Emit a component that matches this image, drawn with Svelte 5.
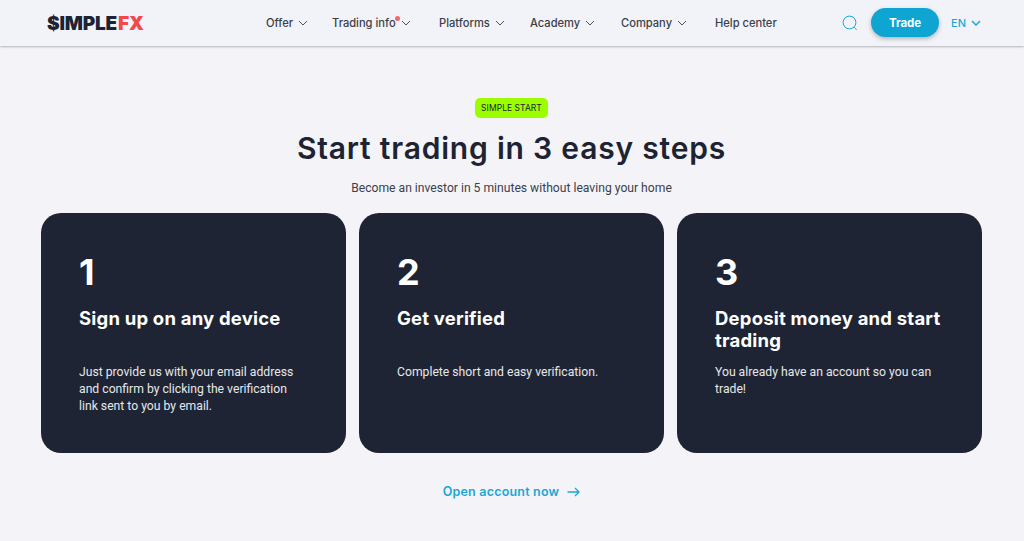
<script>
  const nav = [
    { label: "Offer", width: 66, caret: true },
    { label: "Trading info", width: 107, caret: true, dot: true },
    { label: "Platforms", width: 91, caret: true },
    { label: "Academy", width: 91, caret: true },
    { label: "Company", width: 94, caret: true },
    { label: "Help center", width: 62, caret: false }
  ];

  const steps = [
    {
      num: "1",
      title: "Sign up on any device",
      text: "Just provide us with your email address and confirm by clicking the verification link sent to you by email."
    },
    { num: "2", title: "Get verified", text: "Complete short and easy verification." },
    {
      num: "3",
      title: "Deposit money and start trading",
      text: "You already have an account so you can trade!"
    }
  ];
</script>

<header>
  <div class="logo">$IMPLE<span>FX</span></div>
  <nav>
    {#each nav as item}
      <div class="nav-item" style="width: {item.width}px">
        <span>{item.label}</span>
        {#if item.dot}<i class="dot"></i>{/if}
        {#if item.caret}
          <svg width="10" height="6" viewBox="0 0 10 6"><path d="M1 1l4 4 4-4" fill="none" stroke="#3a3f4b" stroke-width="0.9" /></svg>
        {/if}
      </div>
    {/each}
  </nav>
  <div class="actions">
    <svg class="search" width="16" height="16" viewBox="0 0 16 16">
      <circle cx="7.5" cy="7.5" r="6.4" fill="none" stroke="#1ba7d6" stroke-width="1" />
      <path d="M12.2 12.2l2.4 2.6" fill="none" stroke="#1ba7d6" stroke-width="1" />
    </svg>
    <button>Trade</button>
    <div class="lang">
      EN
      <svg width="10" height="6" viewBox="0 0 10 6"><path d="M1 1l4 4 4-4" fill="none" stroke="#1ba7d6" stroke-width="1.5" /></svg>
    </div>
  </div>
</header>

<main>
  <div class="badge">SIMPLE START</div>
  <h1>Start trading in 3 easy steps</h1>
  <p class="sub">Become an investor in 5 minutes without leaving your home</p>

  <section class="cards">
    {#each steps as step}
      <article>
        <div class="num">{step.num}</div>
        <h2>{step.title}</h2>
        <p>{step.text}</p>
      </article>
    {/each}
  </section>

  <a class="open" href="#open">
    Open account now
    <svg width="13" height="10" viewBox="0 0 13 10"><path d="M0.5 5h11.5M8 1l4 4-4 4" fill="none" stroke="#1ba7d6" stroke-width="1.3" /></svg>
  </a>
</main>

<style>
  :global(body) {
    background: #f4f4f8;
    color: #1d2333;
    font-family: "Roboto", sans-serif;
  }

  header {
    height: 46px;
    display: flex;
    align-items: center;
    padding: 0 43px 0 47px;
    background: #f2f3f8;
    box-shadow: 0 1px 2px rgba(30, 35, 50, 0.3);
  }

  .logo {
    width: 219px;
    font: 900 19px "Inter", sans-serif;
    letter-spacing: -0.2px;
    color: #1d2333;
  }

  .logo span {
    color: #f4474a;
    margin-left: 1px;
  }

  nav {
    display: flex;
    align-items: center;
    flex: 1;
    font: 500 11.15px "Inter", sans-serif;
    color: #3a3f4b;
  }

  .nav-item {
    display: flex;
    align-items: center;
    gap: 5px;
    position: relative;
    white-space: nowrap;
  }

  .dot {
    position: absolute;
    left: 63px;
    top: 0;
    width: 5px;
    height: 5px;
    border-radius: 50%;
    background: #f4686a;
  }

  .actions {
    display: flex;
    align-items: center;
  }

  .search {
    margin-right: 13px;
  }

  button {
    width: 68px;
    height: 29px;
    margin-top: -1px;
    border: 0;
    border-radius: 15px;
    background: #0fa5d3;
    color: #fff;
    font: 700 11.5px "Inter", sans-serif;
    box-shadow: 0 2px 4px rgba(30, 35, 50, 0.3);
  }

  .lang {
    display: flex;
    align-items: center;
    gap: 5px;
    margin-left: 12px;
    color: #1ba7d6;
    font: 500 11px "Inter", sans-serif;
  }

  main {
    display: flex;
    flex-direction: column;
    align-items: center;
    padding: 52px 1px 0 0;
  }

  .badge {
    width: 73px;
    height: 20px;
    text-align: center;
    border-radius: 5px;
    background: #9cff00;
    font: 400 8.5px/20px "Inter", sans-serif;
    letter-spacing: 0.05px;
    white-space: nowrap;
  }

  h1 {
    margin: 10px 0 0;
    font: 600 30px/40px "Inter", sans-serif;
    letter-spacing: 0.8px;
    color: #1d2333;
  }

  .sub {
    margin: 12px 0 0;
    font-size: 12.15px;
    line-height: 17px;
    color: #3a3f4b;
  }

  .cards {
    display: grid;
    grid-template-columns: repeat(3, 305px);
    gap: 13px;
    margin-top: 16px;
  }

  article {
    height: 240px;
    box-sizing: border-box;
    padding: 37px 38px 0;
    border-radius: 20px;
    background: #1e2433;
    color: #fff;
  }

  .num {
    font: 700 36px/44px "Inter", sans-serif;
  }

  h2 {
    margin: 13px 0 0;
    min-height: 44px;
    font: 700 18.5px/22px "Inter", sans-serif;
    letter-spacing: 0.2px;
  }

  article p {
    margin: 13px 0 0;
    font-size: 12.2px;
    line-height: 17px;
    color: #e6e7ec;
  }

  .open {
    display: flex;
    align-items: center;
    gap: 8px;
    margin-top: 30px;
    color: #1ba7d6;
    font: 600 12.5px/17px "Inter", sans-serif;
    letter-spacing: 0.2px;
    text-decoration: none;
  }
</style>
